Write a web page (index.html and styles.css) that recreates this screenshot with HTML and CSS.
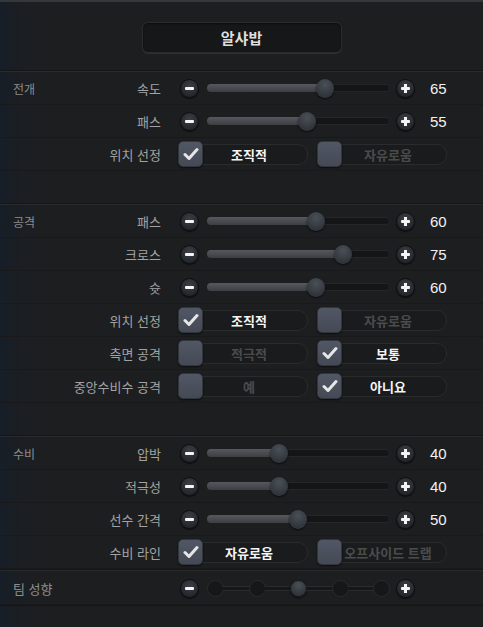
FILE: index.html
```html
<!DOCTYPE html>
<html lang="ko">
<head>
<meta charset="utf-8">
<link rel="stylesheet" href="styles.css">
</head>
<body>
<div class="panel">
  <div class="header"><div class="title">알샤밥</div></div>

  <div class="section gap">
    <div class="row">
      <span class="sec">전개</span><span class="label">속도</span>
      <div class="slider">
        <span class="btn minus"></span>
        <div class="track"><div class="fill" style="width:65%"></div><span class="thumb"></span></div>
        <span class="btn plus"></span>
        <span class="val">65</span>
      </div>
    </div>
    <div class="row">
      <span class="sec"></span><span class="label">패스</span>
      <div class="slider">
        <span class="btn minus"></span>
        <div class="track"><div class="fill" style="width:55%"></div><span class="thumb"></span></div>
        <span class="btn plus"></span>
        <span class="val">55</span>
      </div>
    </div>
    <div class="row">
      <span class="sec"></span><span class="label">위치 선정</span>
      <div class="opts">
        <div class="opt on"><span class="cb"><svg viewBox="0 0 16 14" width="16" height="14"><path d="M2 7.5 L6 11.5 L14 2.5" fill="none" stroke="#e6e6e6" stroke-width="3" stroke-linecap="round" stroke-linejoin="round"/></svg></span><span class="otext">조직적</span></div>
        <div class="opt"><span class="cb"></span><span class="otext">자유로움</span></div>
      </div>
    </div>
  </div>

  <div class="section gap">
    <div class="row">
      <span class="sec">공격</span><span class="label">패스</span>
      <div class="slider">
        <span class="btn minus"></span>
        <div class="track"><div class="fill" style="width:60%"></div><span class="thumb"></span></div>
        <span class="btn plus"></span>
        <span class="val">60</span>
      </div>
    </div>
    <div class="row">
      <span class="sec"></span><span class="label">크로스</span>
      <div class="slider">
        <span class="btn minus"></span>
        <div class="track"><div class="fill" style="width:75%"></div><span class="thumb"></span></div>
        <span class="btn plus"></span>
        <span class="val">75</span>
      </div>
    </div>
    <div class="row">
      <span class="sec"></span><span class="label">슛</span>
      <div class="slider">
        <span class="btn minus"></span>
        <div class="track"><div class="fill" style="width:60%"></div><span class="thumb"></span></div>
        <span class="btn plus"></span>
        <span class="val">60</span>
      </div>
    </div>
    <div class="row">
      <span class="sec"></span><span class="label">위치 선정</span>
      <div class="opts">
        <div class="opt on"><span class="cb"><svg viewBox="0 0 16 14" width="16" height="14"><path d="M2 7.5 L6 11.5 L14 2.5" fill="none" stroke="#e6e6e6" stroke-width="3" stroke-linecap="round" stroke-linejoin="round"/></svg></span><span class="otext">조직적</span></div>
        <div class="opt"><span class="cb"></span><span class="otext">자유로움</span></div>
      </div>
    </div>
    <div class="row">
      <span class="sec"></span><span class="label">측면 공격</span>
      <div class="opts">
        <div class="opt"><span class="cb"></span><span class="otext">적극적</span></div>
        <div class="opt on"><span class="cb"><svg viewBox="0 0 16 14" width="16" height="14"><path d="M2 7.5 L6 11.5 L14 2.5" fill="none" stroke="#e6e6e6" stroke-width="3" stroke-linecap="round" stroke-linejoin="round"/></svg></span><span class="otext">보통</span></div>
      </div>
    </div>
    <div class="row">
      <span class="sec"></span><span class="label">중앙수비수 공격</span>
      <div class="opts">
        <div class="opt"><span class="cb"></span><span class="otext">예</span></div>
        <div class="opt on"><span class="cb"><svg viewBox="0 0 16 14" width="16" height="14"><path d="M2 7.5 L6 11.5 L14 2.5" fill="none" stroke="#e6e6e6" stroke-width="3" stroke-linecap="round" stroke-linejoin="round"/></svg></span><span class="otext">아니요</span></div>
      </div>
    </div>
  </div>

  <div class="section">
    <div class="row">
      <span class="sec">수비</span><span class="label">압박</span>
      <div class="slider">
        <span class="btn minus"></span>
        <div class="track"><div class="fill" style="width:40%"></div><span class="thumb"></span></div>
        <span class="btn plus"></span>
        <span class="val">40</span>
      </div>
    </div>
    <div class="row">
      <span class="sec"></span><span class="label">적극성</span>
      <div class="slider">
        <span class="btn minus"></span>
        <div class="track"><div class="fill" style="width:40%"></div><span class="thumb"></span></div>
        <span class="btn plus"></span>
        <span class="val">40</span>
      </div>
    </div>
    <div class="row">
      <span class="sec"></span><span class="label">선수 간격</span>
      <div class="slider">
        <span class="btn minus"></span>
        <div class="track"><div class="fill" style="width:50%"></div><span class="thumb"></span></div>
        <span class="btn plus"></span>
        <span class="val">50</span>
      </div>
    </div>
    <div class="row">
      <span class="sec"></span><span class="label">수비 라인</span>
      <div class="opts">
        <div class="opt on"><span class="cb"><svg viewBox="0 0 16 14" width="16" height="14"><path d="M2 7.5 L6 11.5 L14 2.5" fill="none" stroke="#e6e6e6" stroke-width="3" stroke-linecap="round" stroke-linejoin="round"/></svg></span><span class="otext">자유로움</span></div>
        <div class="opt"><span class="cb"></span><span class="otext">오프사이드 트랩</span></div>
      </div>
    </div>
  </div>

  <div class="section last">
    <div class="row">
      <span class="sec wide">팀 성향</span>
      <div class="slider">
        <span class="btn minus"></span>
        <div class="steps">
          <span class="knot"></span><span class="link"></span>
          <span class="knot"></span><span class="link"></span>
          <span class="knot sel"></span><span class="link"></span>
          <span class="knot"></span><span class="link"></span>
          <span class="knot"></span>
        </div>
        <span class="btn plus"></span>
      </div>
    </div>
  </div>
</div>
</body>
</html>
```

FILE: styles.css
```css
html, body {
  margin: 0;
  padding: 0;
}
body {
  width: 483px;
  height: 627px;
  overflow: hidden;
  background: #1d1e20;
  font-family: "Noto Sans CJK KR", "Noto Sans", sans-serif;
}
.panel {
  height: 627px;
  border-top: 2px solid #36373a;
  box-sizing: border-box;
  background: linear-gradient(to right, rgba(20, 30, 45, 0.55), rgba(29, 30, 32, 0) 40px), #1d1e20;
}
.header {
  height: 68px;
  display: flex;
  justify-content: center;
  padding-top: 20px;
  box-sizing: border-box;
}
.title {
  width: 200px;
  height: 31px;
  box-sizing: border-box;
  border-radius: 6px;
  background: #161718;
  border: 1px solid #2b2c2e;
  box-shadow: 0 1px 0 #2e2f31, inset 0 1px 2px rgba(0, 0, 0, 0.5);
  color: #dddddd;
  font-weight: 700;
  font-size: 15px;
  display: flex;
  align-items: center;
  justify-content: center;
}
.section {
  border-top: 1px solid #141516;
  box-shadow: inset 0 1px 0 #2a2b2d;
  padding-top: 1px;
}
.section.gap {
  padding-bottom: 32px;
}
.row {
  height: 33px;
  display: flex;
  align-items: center;
  padding-left: 13px;
  box-sizing: border-box;
  border-bottom: 1px solid #19191b;
}
.sec {
  width: 60px;
  font-size: 12px;
  color: #8c8c8c;
}
.sec.wide {
  width: 148px;
  font-size: 13px;
}
.label {
  width: 88px;
  text-align: right;
  font-size: 13px;
  color: #a2a2a2;
  white-space: nowrap;
}
.slider {
  display: flex;
  align-items: center;
  margin-left: 19px;
}
.btn {
  width: 19px;
  height: 19px;
  border-radius: 50%;
  box-sizing: border-box;
  background: radial-gradient(circle at 50% 35%, #3b3f46, #24272c 70%);
  border: 1px solid #0e0f10;
  box-shadow: 0 1px 1px rgba(0, 0, 0, 0.6);
  display: flex;
  align-items: center;
  justify-content: center;
}
.btn::before {
  content: "";
  width: 9px;
  height: 3px;
  background: #f4f4f4;
  border-radius: 1px;
}
.plus {
  background-image:
    linear-gradient(#f4f4f4, #f4f4f4),
    radial-gradient(circle at 50% 35%, #3b3f46, #24272c 70%);
  background-size: 3px 9px, 100% 100%;
  background-position: center, center;
  background-repeat: no-repeat;
}
.track {
  width: 183px;
  height: 8px;
  margin-left: 8px;
  box-sizing: border-box;
  border-radius: 4px;
  background: #141516;
  border: 1px solid #252628;
  display: flex;
  align-items: center;
}
.fill {
  height: 8px;
  border-radius: 4px 0 0 4px;
  background: linear-gradient(#55585d, #3c3e42);
  margin-left: -1px;
}
.thumb {
  flex: none;
  width: 18px;
  height: 19px;
  border-radius: 50%;
  margin-left: -9px;
  background: radial-gradient(circle at 50% 30%, #4a5058, #31353b 70%);
  box-shadow: 0 1px 2px rgba(0, 0, 0, 0.7);
}
.slider .plus {
  margin-left: 6px;
}
.val {
  margin-left: 15px;
  font-family: "Liberation Sans", Arial, sans-serif;
  font-size: 15px;
  color: #f2f2f2;
}
.opts {
  display: flex;
  margin-left: 17px;
  gap: 9px;
}
.opt {
  width: 130px;
  height: 21px;
  box-sizing: border-box;
  border-radius: 10px;
  border: 1px solid #2a2b2d;
  background: #1a1b1c;
  display: flex;
  align-items: center;
}
.cb {
  flex: none;
  width: 25px;
  height: 26px;
  margin-left: -1px;
  box-sizing: border-box;
  border-radius: 5px;
  background: linear-gradient(#515765, #444955);
  border: 1px solid #32353c;
  box-shadow: 0 1px 2px rgba(0, 0, 0, 0.6);
  display: flex;
  align-items: center;
  justify-content: center;
}
.otext {
  flex: 1;
  text-align: center;
  padding-right: 12px;
  font-size: 13px;
  font-weight: 700;
  color: #4a4b4d;
  white-space: nowrap;
}
.opt.on .otext {
  color: #f5f5f5;
}
.steps {
  width: 183px;
  margin-left: 8px;
  display: flex;
  align-items: center;
}
.knot {
  flex: none;
  width: 17px;
  height: 17px;
  box-sizing: border-box;
  border-radius: 50%;
  background: #161718;
  border: 1px solid #2a2b2d;
}
.knot.sel {
  background: radial-gradient(circle at 50% 30%, #4a5058, #31353b 70%);
  border-color: #1a1b1c;
  box-shadow: 0 1px 2px rgba(0, 0, 0, 0.7);
}
.link {
  flex: 1;
  height: 5px;
  box-sizing: border-box;
  background: #161718;
  border-top: 1px solid #2a2b2d;
  border-bottom: 1px solid #2a2b2d;
  margin: 0 -1px;
}
.steps + .plus {
  margin-left: 6px;
}
.section.last {
  padding-top: 2px;
  border-bottom: 1px solid #141516;
}
```
